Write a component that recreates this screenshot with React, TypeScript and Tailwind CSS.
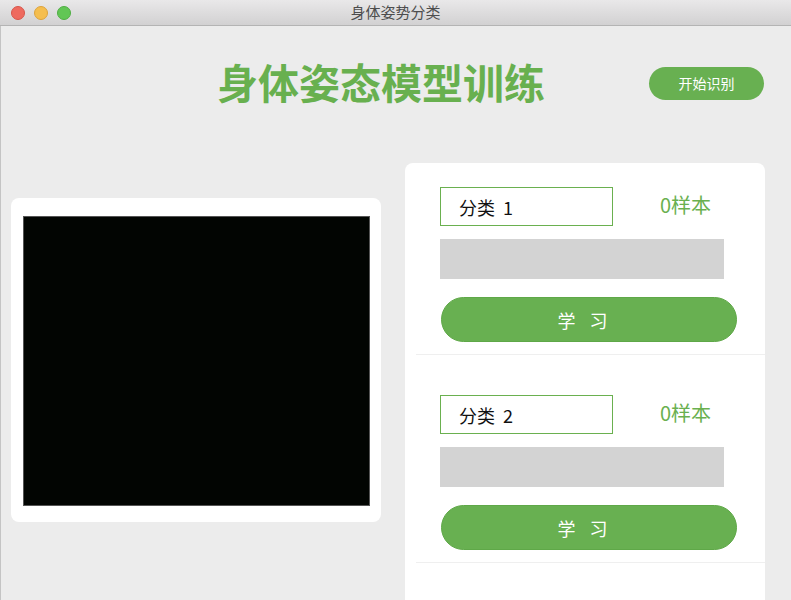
const font = { fontFamily: '"Noto Sans CJK SC", "Noto Sans", sans-serif' };

function ClassItem({ name, num, first }: { name: string; num: string; first?: boolean }) {
  return (
    <div className={first ? 'pt-[24px]' : 'pt-[40px]'}>
      <div className="pl-[35px]">
        <div className="flex items-center">
          <div className="w-[173px] h-[39px] border border-[#6ab04f] bg-white flex items-center pl-[18px] text-[18px] text-[#111] leading-none">
            {name}
            <span className="ml-[8px]">{num}</span>
          </div>
          <div className="ml-[47px] -mt-[4px] text-[20px] leading-none text-[#6ab04f]">0样本</div>
        </div>
        <div className="mt-[13px] w-[284px] h-[40px] bg-[#d3d3d3]" />
        <button className="mt-[18px] ml-[1px] w-[296px] h-[45px] rounded-full bg-[#68b051] border border-[#5fa848] text-white text-[18px] tracking-[5px] leading-none flex items-center justify-center pr-[8px]">
          学 习
        </button>
      </div>
      <div className="mt-[12px] ml-[11px] h-[1px] bg-[#efefef]" />
    </div>
  );
}

export default function App() {
  return (
    <div
      className="w-[791px] h-[600px] overflow-hidden bg-[#ececec] shadow-[inset_1px_0_0_#c4c4c4] flex flex-col"
      style={font}
    >
      {/* title bar */}
      <div className="h-[26px] shrink-0 bg-gradient-to-b from-[#e9e8e9] to-[#d2d1d2] border-b border-[#b4b4b4] flex items-center relative">
        <div className="flex gap-[9px] pl-[11px]">
          <span className="w-[14px] h-[14px] rounded-full bg-[#ee6a5f] border border-[#d8554a]" />
          <span className="w-[14px] h-[14px] rounded-full bg-[#f5be4f] border border-[#dda33b]" />
          <span className="w-[14px] h-[14px] rounded-full bg-[#62c655] border border-[#4fae43]" />
        </div>
        <div className="absolute inset-0 flex items-center justify-center text-[15px] text-[#4d4d4d]">
          身体姿势分类
        </div>
      </div>

      {/* header */}
      <div className="flex items-center pt-[34px]">
        <h1 className="ml-[217px] text-[41px] leading-none font-bold text-[#68b04f] h-[42px] flex items-center">
          身体姿态模型训练
        </h1>
        <button className="ml-auto mr-[27px] mt-[4px] w-[115px] h-[33px] rounded-full bg-[#68b051] text-white text-[14px] leading-none flex items-center justify-center">
          开始识别
        </button>
      </div>

      {/* main */}
      <div className="flex items-start mt-[61px] pl-[11px] gap-[24px]">
        <div className="mt-[35px] w-[370px] h-[324px] bg-white rounded-[8px] pt-[18px] pl-[12px]">
          <div className="w-[347px] h-[290px] bg-[#020502] border border-[#555]" />
        </div>
        <div className="w-[360px] h-[480px] bg-white rounded-[8px]">
          <ClassItem name="分类" num="1" first />
          <ClassItem name="分类" num="2" />
        </div>
      </div>
    </div>
  );
}
